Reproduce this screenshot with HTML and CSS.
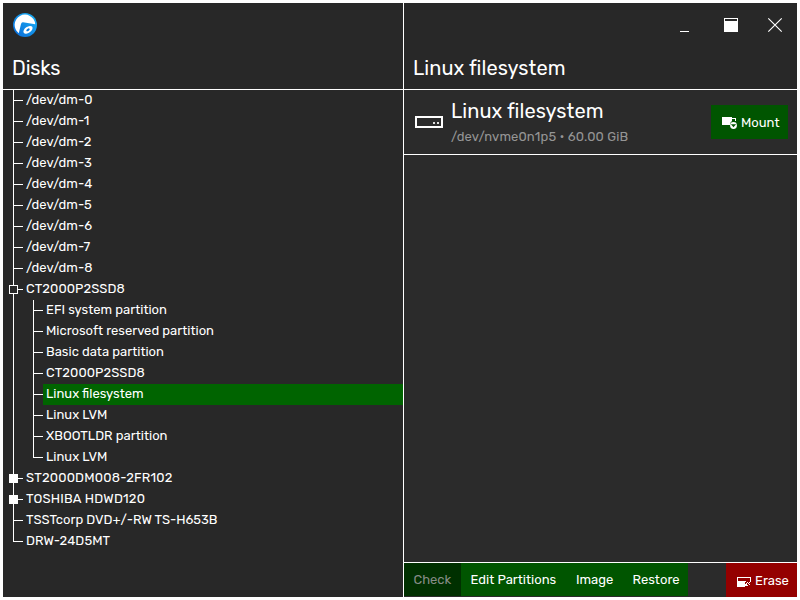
FILE: index.html
```html
<!DOCTYPE html>
<html lang="en">
<head>
<meta charset="utf-8">
<title>Disks</title>
<link rel="stylesheet" href="styles.css">
</head>
<body>
<div class="window">
  <aside class="sidebar">
    <header class="head">
      <svg class="logo" width="26" height="26" viewBox="0 0 26 26">
        <defs><linearGradient id="g" x1="0" y1="1" x2="1" y2="0"><stop offset="0" stop-color="#0868d8"/><stop offset="1" stop-color="#1cb4f4"/></linearGradient></defs>
        <circle cx="13" cy="13" r="12" fill="url(#g)"/>
        <path d="M6.8 21.2A10.3 10.3 0 1 1 23.2 12.2L11 10.2Q9.5 10 9 12Z" fill="#fff"/>
        <ellipse cx="16" cy="17.8" rx="5.2" ry="3" transform="rotate(-35 16 17.8)" fill="#fff"/>
        <ellipse cx="16" cy="17.8" rx="1.9" ry="1.1" transform="rotate(-35 16 17.8)" fill="#087ce0"/>
      </svg>
      <h1 class="title t-disks">Disks</h1>
    </header>
    <ul class="tree">
      <li><span class="row">/dev/dm-0</span></li>
      <li><span class="row">/dev/dm-1</span></li>
      <li><span class="row">/dev/dm-2</span></li>
      <li><span class="row">/dev/dm-3</span></li>
      <li><span class="row">/dev/dm-4</span></li>
      <li><span class="row">/dev/dm-5</span></li>
      <li><span class="row">/dev/dm-6</span></li>
      <li><span class="row">/dev/dm-7</span></li>
      <li><span class="row">/dev/dm-8</span></li>
      <li><i class="box open"></i><span class="row model">CT2000P2SSD8</span>
        <ul class="branch">
          <li><span class="row">EFI system partition</span></li>
          <li><span class="row">Microsoft reserved partition</span></li>
          <li><span class="row">Basic data partition</span></li>
          <li><span class="row model">CT2000P2SSD8</span></li>
          <li><span class="row selected">Linux filesystem</span></li>
          <li><span class="row">Linux LVM</span></li>
          <li><span class="row">XBOOTLDR partition</span></li>
          <li><span class="row">Linux LVM</span></li>
        </ul>
      </li>
      <li><i class="box"></i><span class="row hdd">ST2000DM008-2FR102</span></li>
      <li><i class="box"></i><span class="row hdd">TOSHIBA HDWD120</span></li>
      <li><span class="row">TSSTcorp DVD+/-RW TS-H653B</span></li>
      <li><span class="row model">DRW-24D5MT</span></li>
    </ul>
  </aside>
  <main class="main">
    <header class="head">
      <div class="controls">
        <svg width="26" height="26" viewBox="0 0 26 26"><path d="M8 19h9v1H8z" fill="#fff"/></svg>
        <svg width="26" height="26" viewBox="0 0 26 26"><path d="M7 6h14v14H7zM8 7v2h12V7z" fill="#fff" fill-rule="evenodd"/></svg>
        <svg width="26" height="26" viewBox="0 0 26 26"><path d="M6.3 6.3l13.4 13.4M19.7 6.3L6.3 19.7" stroke="#fff" stroke-width="1.15"/></svg>
      </div>
      <h2 class="title">Linux filesystem</h2>
    </header>
    <section class="volume">
      <svg class="drive" width="28" height="12" viewBox="0 0 28 12"><path d="M1 1h26v10H1z" fill="none" stroke="#fff" stroke-width="2"/><path d="M18 6h2v2h-2zM22 6h2v2h-2z" fill="#ddd"/></svg>
      <div class="info">
        <h3 class="title">Linux filesystem</h3>
        <p class="detail">/dev/nvme0n1p5 • 60.00 GiB</p>
      </div>
      <button class="btn mount"><svg width="16" height="14" viewBox="0 0 16 14"><path d="M0 2h10v4Q8 7 8 10H0zM10 3h4v3h-1V4h-3z" fill="#fff"/><circle cx="11.5" cy="10.5" r="3.4" fill="#fff"/><path d="M8.9 9.3h5.2l-2.6 2.9z" fill="#005500"/></svg><span>Mount</span></button>
    </section>
    <footer class="actions">
      <button class="btn check" disabled>Check</button>
      <button class="btn edit">Edit Partitions</button>
      <button class="btn image">Image</button>
      <button class="btn restore">Restore</button>
      <button class="btn erase"><svg width="15" height="14" viewBox="0 0 15 14"><path d="M0 4h14v4h-1V5H1v3h8v1H8v5H0z" fill="#fff"/><path d="M10 9h1v1h-1zM12 9h1v1h-1zM11 10h1v1h-1zM13 8h1v1h-1zM9 10h1v1H9zM8 11h2v2H8zM10 12h1v1h-1zM12 11h1v1h-1z" fill="#fff"/></svg><span>Erase</span></button>
    </footer>
  </main>
</div>
</body>
</html>
```
FILE: styles.css
```css
* { box-sizing: border-box; }
body {
  margin: 0;
  background: #fff;
  color: #fff;
  font: 13px/21px Rubik, Roboto, "Liberation Sans", sans-serif;
}
.window {
  display: grid;
  grid-template-columns: 401px 1fr;
  width: 794px;
  height: 594px;
  margin: 3px;
  background: #292929;
}
.sidebar { border-right: 1px solid #fff; background: #282828; }
.main { display: flex; flex-direction: column; background: #2b2b2b; }
.head {
  height: 87px;
  padding: 9px 9px 0;
  border-bottom: 1px solid #fff;
  background: #282828;
}
.logo, .controls { display: block; height: 26px; }
.controls { display: flex; justify-content: flex-end; gap: 19px; }
.title {
  margin: 0;
  font-size: 20px;
  line-height: 24px;
  font-weight: 400;
  letter-spacing: 0.06px;
  font-variant-ligatures: common-ligatures;
  white-space: nowrap;
}
.head .title { margin-top: 18px; }
.head .t-disks { letter-spacing: -0.15px; }
.tree, .branch { margin: 0; padding: 0; list-style: none; }
.tree { padding-left: 10px; }
.branch { margin-left: 20px; }
.tree li { position: relative; }
.tree li::before {
  content: "";
  position: absolute;
  left: 0;
  top: 0;
  bottom: 0;
  border-left: 1px solid #fff;
}
.tree li:last-child::before { bottom: auto; height: 11px; }
.tree li::after {
  content: "";
  position: absolute;
  left: 0;
  top: 10px;
  width: 10px;
  height: 1px;
  background: #fff;
}
.row {
  display: block;
  height: 21px;
  line-height: 20px;
  margin-left: 10px;
  padding-left: 3px;
  white-space: nowrap;
}
.model { letter-spacing: 0.08px; }
.hdd { letter-spacing: 0.2px; }
.selected { background: #006400; }
.box {
  position: absolute;
  z-index: 1;
  left: -4px;
  top: 6px;
  width: 9px;
  height: 9px;
  border: 1px solid #fff;
  background: #fff;
}
.box.open { background: #282828; }
.volume {
  display: flex;
  align-items: center;
  height: 65px;
  padding: 0 9px 0 11px;
  border-bottom: 1px solid #fff;
}
.info { margin-left: 8px; flex: 1; align-self: flex-start; padding-top: 9px; }
.detail { margin: 4px 0 0; line-height: 20px; color: #959595; letter-spacing: 0.11px; }
.btn {
  display: flex;
  align-items: center;
  height: 33px;
  padding: 0 0 0 9.5px;
  border: 0;
  background: #005500;
  color: #fff;
  font: inherit;
  white-space: nowrap;
}
.mount { width: 77px; height: 34px; padding-left: 11px; gap: 3px; }
.actions {
  display: flex;
  height: 35px;
  margin-top: auto;
  border-top: 1px solid #fff;
}
.check { width: 57px; background: #003000; color: #878c87; }
.edit { width: 105px; }
.image { width: 57px; padding-left: 10px; }
.restore { width: 65px; }
.erase { width: 71px; height: 34px; margin-left: auto; padding-left: 11px; gap: 3px; background: #940000; }
```
